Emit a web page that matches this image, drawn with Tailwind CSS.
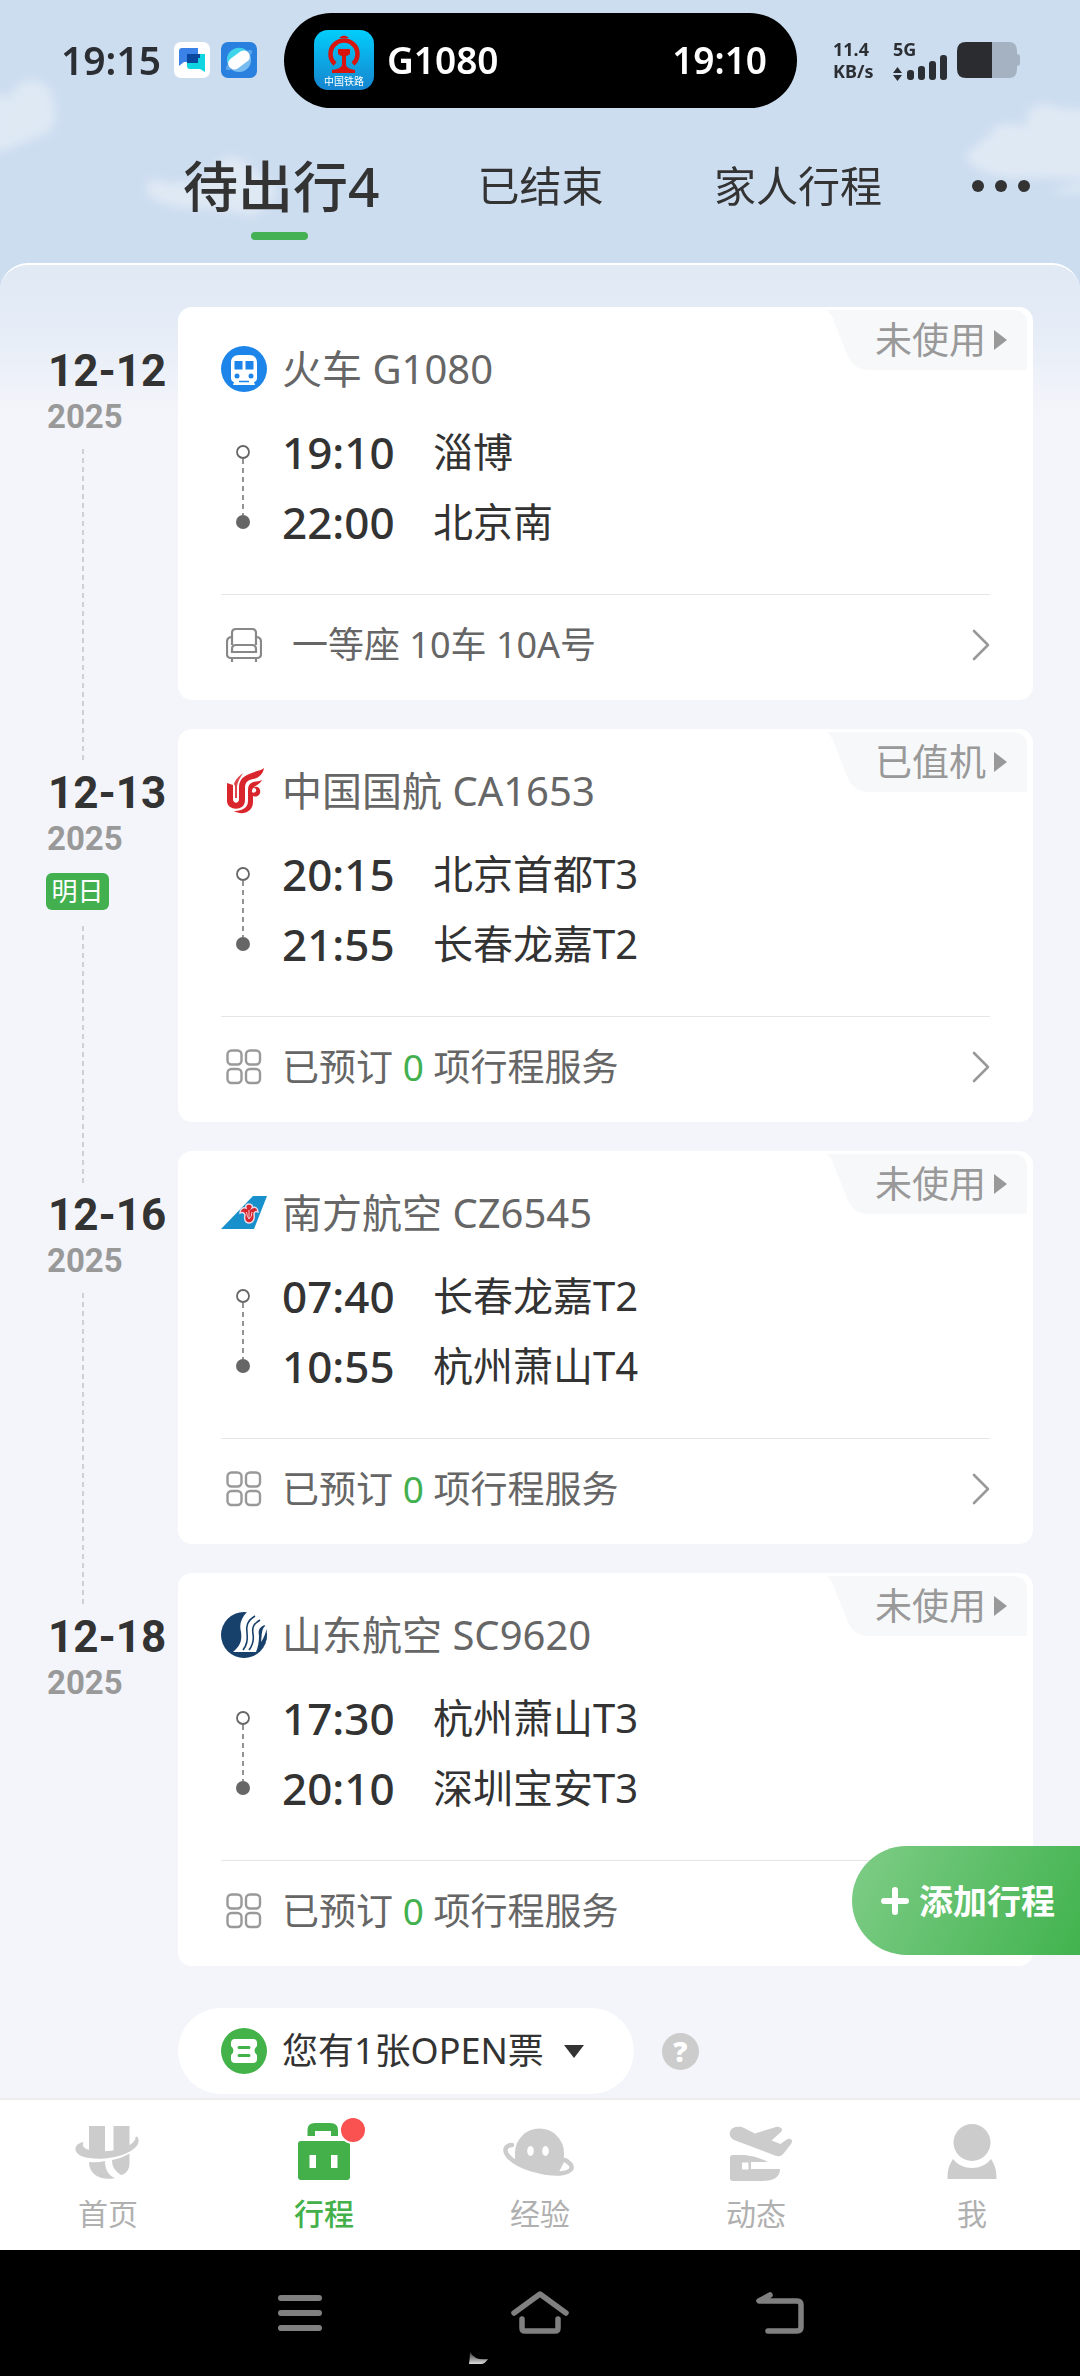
<!DOCTYPE html>
<html lang="zh-CN">
<head>
<meta charset="utf-8">
<meta name="viewport" content="width=device-width, initial-scale=1">
<title>行程</title>
<script src="https://cdn.jsdelivr.net/npm/@tailwindcss/browser@4"></script>
</head>
<body class="bg-[#cdddf0] font-['Noto_Sans','Noto_Sans_CJK_SC',sans-serif] text-[#333]">

<!-- shared icons -->
<svg class="hidden" aria-hidden="true">
  <symbol id="grid" viewBox="0 0 36 36"><g fill="none" stroke="#999" stroke-width="2.4"><rect x="1.5" y="1.5" width="14" height="14" rx="4"/><rect x="20" y="1.5" width="14" height="14" rx="4"/><rect x="1.5" y="20" width="14" height="14" rx="4"/><rect x="20" y="20" width="14" height="14" rx="4"/></g></symbol>
  <symbol id="chevron" viewBox="0 0 18 32"><path d="M2 2 L16 16 L2 30" fill="none" stroke="#999" stroke-width="2.6" stroke-linecap="round" stroke-linejoin="round"/></symbol>
  <symbol id="tagshape" viewBox="0 0 200 60"><path d="M0 0 H186 Q200 0 200 14 V60 H42 C30 60 24 54 20 44 L8 14 Q5 4 0 0Z" fill="#f7f8fa"/></symbol>
  <symbol id="route" viewBox="0 0 16 86"><circle cx="8" cy="8" r="6" fill="#fff" stroke="#666" stroke-width="1.8"/><path d="M8 15 V71" stroke="#666" stroke-width="1.4" stroke-dasharray="5 4"/><circle cx="8" cy="78" r="7" fill="#666"/></symbol>
</svg>

<div class="relative flex min-h-screen flex-col">

  <!-- sky -->
  <svg class="absolute inset-x-0 top-0 h-[264px] w-full" viewBox="0 0 1080 264" preserveAspectRatio="none" aria-hidden="true">
    <defs><filter id="soft" x="-30%" y="-30%" width="160%" height="160%"><feGaussianBlur stdDeviation="5"/></filter></defs>
    <g fill="#e3ecf5" filter="url(#soft)">
      <path d="M-10 96 Q4 92 10 98 Q14 80 34 80 Q54 84 54 106 Q60 124 46 134 Q30 140 16 146 Q2 150 -10 156Z" opacity=".75"/>
      <path d="M146 190 Q146 178 160 180 Q168 186 180 182 Q206 188 212 168 Q228 150 246 162 Q262 180 276 186 Q276 206 250 216 Q214 206 184 208 Q152 204 146 190Z" opacity=".8"/>
      <path d="M966 156 Q978 142 990 136 Q994 122 1012 124 Q1024 128 1028 122 Q1024 106 1048 104 Q1066 112 1090 108 V180 Q1040 176 1010 178 Q970 172 966 156Z" opacity=".8"/>
      <path d="M1052 192 Q1066 184 1090 184 V192 Q1070 196 1052 192Z" opacity=".7"/>
    </g>
  </svg>

  <!-- status bar -->
  <div class="relative flex h-[120px] shrink-0 items-center pl-[61px] pr-[59px]">
    <span class="w-[113px] text-[39px] leading-[48px] font-semibold text-[#2b2e33]">19:15</span>
    <svg class="h-9 w-9" viewBox="0 0 36 36" role="img" aria-label="消息"><rect width="36" height="36" rx="7" fill="#fff"/><path d="M5 9 Q5 6 8 6 H24 V20 H10 L5 24Z" fill="#3b82e8"/><path d="M13 15 Q13 12 16 12 H31 V30 L26 27 H16 Q13 27 13 24Z" fill="#0fd5e0"/><path d="M13 12 H26 V16 H24 V21 H13Z" fill="#0a479f"/></svg>
    <svg class="ml-[11px] h-9 w-9" viewBox="0 0 36 36" role="img" aria-label="浏览器"><rect width="36" height="36" rx="7" fill="#2a80de"/><circle cx="18" cy="18" r="12" fill="#79bdf0"/><path d="M6 18 A12 12 0 0 1 26 9 L9 26Z" fill="#3fd4ec"/><g transform="rotate(-36 18 18)"><ellipse cx="18" cy="18" rx="16" ry="4.500" fill="#5aa6ea"/><rect x="6" y="12" width="24" height="12" rx="6" fill="#fff"/></g></svg>
    <div class="ml-[27px] mr-[36px] flex h-[95px] flex-1 items-center rounded-full bg-black pl-[30px] pr-[30px] text-[37px] leading-[46px] font-semibold text-white">
      <svg class="mr-[13px] h-[60px] w-[60px]" viewBox="0 0 60 60" role="img" aria-label="中国铁路">
        <defs><linearGradient id="rail" x1="0" y1="0" x2="0" y2="1"><stop offset="0" stop-color="#02cdfb"/><stop offset="1" stop-color="#1684cf"/></linearGradient></defs>
        <rect width="60" height="60" rx="14" fill="url(#rail)"/>
        <path d="M21 34 A13.500 13.500 0 1 1 39 34" fill="none" stroke="#d8140f" stroke-width="4.500"/>
        <path d="M25 8 Q30 3 35 8Z M24 19 H36 V23 Q36 25 32 26 V35 Q33 39 41 40 V43 H18 V40 Q27 39 28 35 V26 Q24 25 24 23Z" fill="#d8140f"/>
        <text x="30" y="55" text-anchor="middle" font-size="10" fill="#fff" font-weight="400">中国铁路</text>
      </svg>
      <span>G1080</span>
      <span class="ml-auto">19:10</span>
    </div>
    <div class="w-[60px] text-[18px] leading-[22px] font-bold text-[#2b2e33]"><div>11.4</div><div>KB/s</div></div>
    <div class="flex h-[44px] w-[56px] flex-col justify-between text-[#2b2e33]">
      <span class="text-[18px] leading-[22px] font-bold">5G</span>
      <svg class="-mt-[7px] h-[27px] w-[56px]" viewBox="0 13 56 27" role="img" aria-label="信号"><path d="M0 31 L4.500 25 L9 31Z M0 33 H9 L4.500 39Z" fill="#2b2e33"/><g fill="#2b2e33"><rect x="14" y="28" width="7" height="10" rx="3"/><rect x="25" y="24" width="7" height="14" rx="3"/><rect x="36" y="19" width="7" height="19" rx="3"/><rect x="47" y="13" width="7" height="25" rx="3"/></g></svg>
    </div>
    <svg class="ml-[8px] h-9 w-[64px]" viewBox="0 0 64 36" role="img" aria-label="电量"><path d="M35 0 H52 Q60 0 60 9 V12 Q63 12 63 15 V21 Q63 24 60 24 V27 Q60 36 52 36 H35Z" fill="#a5b2c1"/><path d="M35 0 H9 Q0 0 0 9 V27 Q0 36 9 36 H35Z" fill="#2b2c2f"/></svg>
  </div>

  <!-- trip tabs -->
  <nav class="relative mb-[11px] flex h-[132px] shrink-0 items-center pl-[183px] pr-[50px] text-[42px] leading-[56px]" aria-label="行程分类">
    <a href="#" class="relative text-[55px] font-medium" aria-current="page">待出行4<span class="absolute -bottom-[26px] left-[68px] h-2 w-[57px] rounded-full bg-[#44b154]"></span></a>
    <a href="#" class="ml-[98px]">已结束</a>
    <a href="#" class="ml-auto">家人行程</a>
    <button type="button" aria-label="更多" class="ml-[90px] flex gap-[11px]"><span class="h-3 w-3 rounded-full bg-[#333]"></span><span class="h-3 w-3 rounded-full bg-[#333]"></span><span class="h-3 w-3 rounded-full bg-[#333]"></span></button>
  </nav>

  <!-- trip list -->
  <main class="relative flex-1 rounded-t-[28px] border-t-2 border-white bg-[linear-gradient(to_bottom,#e0e9f4_0px,#e3ebf6_50px,#f4f5fa_150px)] pt-[42px]">
    <ul>
      <li class="flex h-[422px] items-start">
        <div class="flex w-[178px] shrink-0 flex-col self-stretch pt-[39px]">
          <time datetime="2025-12-12"><span class="ml-[48px] block font-['Roboto'] text-[44px] leading-[50px] font-bold">12-12</span><span class="ml-[47px] block font-['Roboto'] text-[33px] leading-[42px] font-bold text-[#999]">2025</span></time>
          <span class="-mb-[33px] ml-[82px] mt-[11px] w-[2px] flex-1 bg-[repeating-linear-gradient(to_bottom,#cfd0d5_0px_5px,transparent_5px_9px)]"></span>
        </div>
        <article class="relative mr-[47px] flex-1 rounded-[14px] bg-white px-[43px] pb-[5px] pt-[34px]">
          <a href="#" class="absolute right-[6px] top-[3px] flex h-[60px] w-[200px] items-center gap-[8px] pl-[48px] text-[37px] leading-[56px] text-[#999]"><svg class="absolute inset-0 h-[60px] w-[200px]" aria-hidden="true"><use href="#tagshape"/></svg><span class="relative">未使用</span><svg class="relative h-5 w-[13px]" viewBox="0 0 13 20"><path d="M0 0 L13 10 L0 20Z" fill="#999"/></svg></a>
          <h2 class="flex h-[56px] items-center gap-[15px] text-[40px] leading-[56px] text-[#666]">
            <svg class="h-[46px] w-[46px]" viewBox="0 0 46 46" aria-hidden="true"><circle cx="23" cy="23" r="23" fill="#1d85ea"/><path d="M10 17 Q10 9 18 9 H28 Q36 9 36 17 V32 Q36 35 33 36 L34 39 H12 L13 36 Q10 35 10 32Z" fill="#fff"/><path d="M13.500 15 H21.500 V23.500 H13.500Z M24.500 15 H32.500 V23.500 H24.500Z" fill="#1d85ea"/><circle cx="16" cy="30" r="2.500" fill="#1d85ea"/><circle cx="30" cy="30" r="2.500" fill="#1d85ea"/><path d="M18 35.500 H28" stroke="#1d85ea" stroke-width="1.500"/></svg>火车 G1080</h2>
          <div class="mt-5 flex items-center">
            <svg class="ml-[14px] h-[86px] w-[16px]" aria-hidden="true"><use href="#route"/></svg>
            <dl class="ml-[31px] grid grid-cols-[151px_1fr] text-[40px] leading-[70px]"><dt class="text-[44px] font-medium">19:10</dt><dd>淄博</dd><dt class="text-[44px] font-medium">22:00</dt><dd>北京南</dd></dl>
          </div>
          <a href="#" class="mt-[37px] flex h-[101px] items-center border-t border-[#e6e6e6] text-[36px] leading-[56px] text-[#666]"><svg class="ml-[5px] mr-[30px] h-9 w-9" viewBox="0 0 36 36" aria-hidden="true"><g fill="none" stroke="#888" stroke-width="2.200"><path d="M6 18 V6 Q6 2 10 2 H26 Q30 2 30 6 V18"/><path d="M6 10 Q1 10 1 15 V27 Q1 31 5 31 H31 Q35 31 35 27 V15 Q35 10 30 10"/><path d="M6 25 V22 Q6 18 10 18 H26 Q30 18 30 22 V25Z M6 31 V35 M30 31 V35"/></g></svg><span class="flex-1">一等座 10车 10A号</span><svg class="h-8 w-[18px]" aria-hidden="true"><use href="#chevron"/></svg></a>
        </article>
      </li>

      <li class="flex h-[422px] items-start">
        <div class="flex w-[178px] shrink-0 flex-col self-stretch pt-[39px]">
          <time datetime="2025-12-13"><span class="ml-[48px] block font-['Roboto'] text-[44px] leading-[50px] font-bold">12-13</span><span class="ml-[47px] block font-['Roboto'] text-[33px] leading-[42px] font-bold text-[#999]">2025</span></time>
          <span class="ml-[46px] mt-[13px] w-[63px] rounded-[6px] bg-[#43b04f] text-center text-[26px] leading-[37px] text-white">明日</span>
          <span class="-mb-[33px] ml-[82px] mt-4 w-[2px] flex-1 bg-[repeating-linear-gradient(to_bottom,#cfd0d5_0px_5px,transparent_5px_9px)]"></span>
        </div>
        <article class="relative mr-[47px] flex-1 rounded-[14px] bg-white px-[43px] pb-[5px] pt-[34px]">
          <a href="#" class="absolute right-[6px] top-[3px] flex h-[60px] w-[200px] items-center gap-[8px] pl-[48px] text-[37px] leading-[56px] text-[#999]"><svg class="absolute inset-0 h-[60px] w-[200px]" aria-hidden="true"><use href="#tagshape"/></svg><span class="relative">已值机</span><svg class="relative h-5 w-[13px]" viewBox="0 0 13 20"><path d="M0 0 L13 10 L0 20Z" fill="#999"/></svg></a>
          <h2 class="flex h-[56px] items-center gap-[15px] text-[40px] leading-[56px] text-[#666]">
            <svg class="h-[46px] w-[46px]" viewBox="0 0 46 46" aria-hidden="true"><g fill="#d9262c"><path d="M43 0 C40 3 33 3 26 7 C20 10 18 14 18 20 V31 C18 36 12 36 12 31 V17 L6 15 V33 C6 43 24 44 24 32 V20 C24 14 27 12 32 11 C38 10 42 6 43 0Z"/><path d="M41 12 C37 14 32 13 29 16 C27 18 27 20 27 24 V33 C27 41 19 43 13 43 C21 48 32 44 32 34 V28 C37 30 40 26 39 22 C38 18 34 18 32 20 C34 20 36 21 35 23 C34 25 32 25 31 24 C30 18 38 18 41 12Z"/><path d="M13 16 C14 12 18 8 22 5 C19 10 17 13 16 18 V30 H14 V18Z" opacity=".85"/></g></svg>中国国航 CA1653</h2>
          <div class="mt-5 flex items-center">
            <svg class="ml-[14px] h-[86px] w-[16px]" aria-hidden="true"><use href="#route"/></svg>
            <dl class="ml-[31px] grid grid-cols-[151px_1fr] text-[40px] leading-[70px]"><dt class="text-[44px] font-medium">20:15</dt><dd>北京首都T3</dd><dt class="text-[44px] font-medium">21:55</dt><dd>长春龙嘉T2</dd></dl>
          </div>
          <a href="#" class="mt-[37px] flex h-[101px] items-center border-t border-[#e6e6e6] text-[37px] leading-[56px] text-[#666]"><svg class="ml-[5px] mr-[20px] h-9 w-9" aria-hidden="true"><use href="#grid"/></svg><span class="flex-1">已预订 <span class="text-[#43b04f]">0</span> 项行程服务</span><svg class="h-8 w-[18px]" aria-hidden="true"><use href="#chevron"/></svg></a>
        </article>
      </li>

      <li class="flex h-[422px] items-start">
        <div class="flex w-[178px] shrink-0 flex-col self-stretch pt-[39px]">
          <time datetime="2025-12-16"><span class="ml-[48px] block font-['Roboto'] text-[44px] leading-[50px] font-bold">12-16</span><span class="ml-[47px] block font-['Roboto'] text-[33px] leading-[42px] font-bold text-[#999]">2025</span></time>
          <span class="-mb-[33px] ml-[82px] mt-[11px] w-[2px] flex-1 bg-[repeating-linear-gradient(to_bottom,#cfd0d5_0px_5px,transparent_5px_9px)]"></span>
        </div>
        <article class="relative mr-[47px] flex-1 rounded-[14px] bg-white px-[43px] pb-[5px] pt-[34px]">
          <a href="#" class="absolute right-[6px] top-[3px] flex h-[60px] w-[200px] items-center gap-[8px] pl-[48px] text-[37px] leading-[56px] text-[#999]"><svg class="absolute inset-0 h-[60px] w-[200px]" aria-hidden="true"><use href="#tagshape"/></svg><span class="relative">未使用</span><svg class="relative h-5 w-[13px]" viewBox="0 0 13 20"><path d="M0 0 L13 10 L0 20Z" fill="#999"/></svg></a>
          <h2 class="flex h-[56px] items-center gap-[15px] text-[40px] leading-[56px] text-[#666]">
            <svg class="h-[46px] w-[46px]" viewBox="0 0 46 46" aria-hidden="true"><path d="M0 39 L32 6 H46 L33 39Z" fill="#1790cb"/><path d="M28 14 C31 14 32 16 31 18 C34 16 37 18 37 22 C35 21 33 22 33 24 C34 29 32 33 28 33 C24 33 23 29 24 25 C23 22 21 22 19 23 C19 19 22 17 25 18 C24 15 26 14 28 14Z" fill="#d8242c" stroke="#e9d7e4" stroke-width="1.500"/><path d="M28 20 V29 M25.500 22 Q26 27 28 29 M31 22 Q31 27 28 29" stroke="#f1c9cf" fill="none"/></svg>南方航空 CZ6545</h2>
          <div class="mt-5 flex items-center">
            <svg class="ml-[14px] h-[86px] w-[16px]" aria-hidden="true"><use href="#route"/></svg>
            <dl class="ml-[31px] grid grid-cols-[151px_1fr] text-[40px] leading-[70px]"><dt class="text-[44px] font-medium">07:40</dt><dd>长春龙嘉T2</dd><dt class="text-[44px] font-medium">10:55</dt><dd>杭州萧山T4</dd></dl>
          </div>
          <a href="#" class="mt-[37px] flex h-[101px] items-center border-t border-[#e6e6e6] text-[37px] leading-[56px] text-[#666]"><svg class="ml-[5px] mr-[20px] h-9 w-9" aria-hidden="true"><use href="#grid"/></svg><span class="flex-1">已预订 <span class="text-[#43b04f]">0</span> 项行程服务</span><svg class="h-8 w-[18px]" aria-hidden="true"><use href="#chevron"/></svg></a>
        </article>
      </li>

      <li class="flex h-[422px] items-start">
        <div class="w-[178px] shrink-0 pt-[39px]">
          <time datetime="2025-12-18"><span class="ml-[48px] block font-['Roboto'] text-[44px] leading-[50px] font-bold">12-18</span><span class="ml-[47px] block font-['Roboto'] text-[33px] leading-[42px] font-bold text-[#999]">2025</span></time>
        </div>
        <article class="relative mr-[47px] flex-1 rounded-[14px] bg-white px-[43px] pb-[5px] pt-[34px]">
          <a href="#" class="absolute right-[6px] top-[3px] flex h-[60px] w-[200px] items-center gap-[8px] pl-[48px] text-[37px] leading-[56px] text-[#999]"><svg class="absolute inset-0 h-[60px] w-[200px]" aria-hidden="true"><use href="#tagshape"/></svg><span class="relative">未使用</span><svg class="relative h-5 w-[13px]" viewBox="0 0 13 20"><path d="M0 0 L13 10 L0 20Z" fill="#999"/></svg></a>
          <h2 class="flex h-[56px] items-center gap-[15px] text-[40px] leading-[56px] text-[#666]">
            <svg class="h-[46px] w-[46px]" viewBox="0 0 46 46" aria-hidden="true"><defs><clipPath id="disc"><circle cx="23" cy="23" r="23"/></clipPath></defs><circle cx="23" cy="23" r="23" fill="#17406b"/><path d="M27 -1 C20 6 18 12 20 20 C21 28 20 33 12 40 H39 C43 36 45 31 46 22 C46 12 42 5 27 -1Z" fill="#fff"/><g clip-path="url(#disc)"><g fill="none" stroke="#17406b"><path d="M34 4 C26 9 25 14 26 21 C27 28 26 33 22 38" stroke-width="1.600"/><path d="M39 8 C32 12 31 16 32 22 C33 28 32 33 28 38" stroke-width="1.600"/></g><path d="M46 12 C38 15 37 18 38 24 C38 30 37 35 35 40 H42 C48 33 48 24 46 12Z M44 14 C40 18 41 24 40 30 C43 26 45 20 46 15Z" fill="#17406b" fill-rule="evenodd"/></g></svg>山东航空 SC9620</h2>
          <div class="mt-5 flex items-center">
            <svg class="ml-[14px] h-[86px] w-[16px]" aria-hidden="true"><use href="#route"/></svg>
            <dl class="ml-[31px] grid grid-cols-[151px_1fr] text-[40px] leading-[70px]"><dt class="text-[44px] font-medium">17:30</dt><dd>杭州萧山T3</dd><dt class="text-[44px] font-medium">20:10</dt><dd>深圳宝安T3</dd></dl>
          </div>
          <a href="#" class="mt-[37px] flex h-[101px] items-center border-t border-[#e6e6e6] text-[37px] leading-[56px] text-[#666]"><svg class="ml-[5px] mr-[20px] h-9 w-9" aria-hidden="true"><use href="#grid"/></svg><span class="flex-1">已预订 <span class="text-[#43b04f]">0</span> 项行程服务</span><svg class="h-8 w-[18px]" aria-hidden="true"><use href="#chevron"/></svg></a>
        </article>
      </li>
    </ul>

    <div class="ml-[178px] mt-[13px] flex items-center gap-[28px] pb-1">
      <button type="button" class="flex h-[86px] items-center rounded-full bg-white pl-[43px] pr-[50px] text-[36px] leading-[56px]">
        <svg class="mr-[15px] h-[46px] w-[46px]" viewBox="0 0 46 46" aria-hidden="true"><circle cx="23" cy="23" r="23" fill="#42b249"/><path d="M14 11 H32 Q36 11 36 15 V18 Q31 22.500 36 27 V31 Q36 35 32 35 H14 Q10 35 10 31 V27 Q15 22.500 10 18 V15 Q10 11 14 11Z" fill="#fff"/><path d="M18 19.500 H28 M18 27.500 H28" stroke="#42b249" stroke-width="3" stroke-linecap="round"/></svg>
        您有1张OPEN票
        <svg class="ml-[20px] h-[13px] w-[20px]" viewBox="0 0 20 13" aria-hidden="true"><path d="M0 0 H20 L10 13Z" fill="#333"/></svg>
      </button>
      <button type="button" aria-label="帮助" class="h-[37px] w-[37px] rounded-full bg-[#ccc] text-[28px] leading-[37px] font-black text-white">?</button>
    </div>

    <button type="button" class="absolute bottom-[143px] right-0 flex h-[109px] items-center gap-[10px] rounded-l-full bg-[linear-gradient(115deg,#7fcd87_0%,#6cc576_30%,#41b34e_100%)] pl-[29px] pr-[25px] text-[34px] leading-[48px] font-bold text-white">
      <svg class="h-7 w-7" viewBox="0 0 28 28" aria-hidden="true"><path d="M14 3 V25 M3 14 H25" stroke="#fff" stroke-width="6" stroke-linecap="round"/></svg>添加行程</button>
  </main>

  <!-- app tab bar -->
  <nav class="relative grid h-[152px] shrink-0 grid-cols-5 border-t-2 border-[#ececec] bg-white text-[30px] leading-[40px] text-[#b0b0b0]" aria-label="主导航">
    <a href="#" class="flex flex-col items-center pt-5">
      <svg class="h-16 w-[72px]" viewBox="0 0 72 64" fill="#ccc" aria-hidden="true"><g transform="translate(3 4)"><path d="M14 2 H30 V28 H14Z M38.500 2 H54.500 V26 L38.500 30Z"/><path d="M8.500 18 C-3 20 -3 32 14 34 C34 37 58 30 63 20 C65 15 62 11 60.500 13 C61 19 50 25 38 26.500 C26 28 4 28 8.500 18Z"/><path d="M14 38 Q22 39 30 37 C30 46 34 52 40 54 C28 57 14 52 14 38Z M37 36 C45 34.500 50 32 54.500 29.500 V39 C54.500 46 51 50 46 51 C40 47 37 43 37 36Z"/></g></svg>
      <span class="mt-[10px]">首页</span></a>
    <a href="#" class="flex flex-col items-center pt-5 font-medium text-[#43b049]" aria-current="page">
      <span class="relative"><svg class="h-16 w-[72px]" viewBox="0 0 72 64" fill="#43b049" aria-hidden="true"><path d="M19.500 16 V10 Q19.500 3 27 3 H42 Q50 3 50 10 V16 H43 V11 H27 V16Z"/><path d="M13 21 H59 Q62 21 62 24 V57 Q62 60 59 60 H13 Q10 60 10 57 V24 Q10 21 13 21Z M21.500 35 V48 H28 V35Z M43 35 V48 H49.500 V35Z" fill-rule="evenodd"/></svg><span class="absolute -right-[7px] -top-[4px] h-7 w-7 rounded-full border-2 border-white bg-[#fa5151]"></span></span>
      <span class="mt-[10px]">行程</span></a>
    <a href="#" class="flex flex-col items-center pt-5">
      <svg class="h-16 w-[72px] overflow-visible" viewBox="0 0 72 64" aria-hidden="true"><path d="M11 42 V33 A24.500 24.500 0 0 1 60 33 V42 L55 52 C40 53 22 49 11 42Z" fill="#ccc"/><path d="M8 25 C2 25 -1 30 4 36 C14 48 40 54 56 53.500 C70 52 71 46 61 40" fill="none" stroke="#ccc" stroke-width="4.500" stroke-linecap="round"/><ellipse cx="26.500" cy="31" rx="3.300" ry="5" fill="#fff"/><ellipse cx="41.500" cy="31" rx="3.300" ry="5" fill="#fff"/></svg>
      <span class="mt-[10px]">经验</span></a>
    <a href="#" class="flex flex-col items-center pt-5">
      <svg class="h-16 w-[72px]" viewBox="0 0 72 64" fill="#ccc" aria-hidden="true"><path d="M10 12 C11 7 17 6 22 7 L35 13.500 L56 7 C60 6 64 9 61 12 L51.500 20.500 L60.500 24 L66 20 C70 17 74 20 71 24 L64 33 C62 36 59 37 55 35.500 L14 20 C11 18 9 16 10 12Z"/><path d="M13 35 H25 Q37 36 48 42 H31 V49 H60 Q60 61 42 61 H13 Q10 61 10 58 V38 Q10 35 13 35Z M22 42.500 V49.500 H28.500 V42.500Z" fill-rule="evenodd"/></svg>
      <span class="mt-[10px]">动态</span></a>
    <a href="#" class="flex flex-col items-center pt-5">
      <svg class="h-16 w-[72px]" viewBox="0 0 72 64" fill="#ccc" aria-hidden="true"><circle cx="36" cy="22.500" r="18.500"/><path d="M11.500 59 C11.500 50 13 45 17 39 C26 51 46 51 55 39 C59 45 60.500 50 60.500 59Z"/></svg>
      <span class="mt-[10px]">我</span></a>
  </nav>

  <!-- system navigation -->
  <div class="relative flex h-[126px] shrink-0 items-start justify-center gap-[180px] bg-black pt-[34px]">
    <button type="button" aria-label="最近任务"><svg class="h-[60px] w-[60px]" viewBox="0 0 60 60"><path d="M11 14 H49 M11 29 H49 M11 44 H49" stroke="#808080" stroke-width="6" stroke-linecap="round"/></svg></button>
    <button type="button" aria-label="主屏幕"><svg class="h-[60px] w-[60px]" viewBox="0 0 60 60" fill="none" stroke="#808080" stroke-width="5.500" stroke-linecap="round" stroke-linejoin="round"><path d="M4 29 L30 10 L56 29"/><path d="M12 35 V44 Q12 47 15 47 H45 Q48 47 48 44 V35"/></svg></button>
    <button type="button" aria-label="返回"><svg class="h-[60px] w-[60px]" viewBox="0 0 60 60" fill="none" stroke="#808080" stroke-width="5.500" stroke-linecap="round" stroke-linejoin="round"><path d="M20 11 L9 17 H47 Q51 17 51 21 V43 Q51 47 47 47 H18"/></svg></button>
    <svg class="absolute bottom-[11px] left-[467px] h-4 w-[24px]" viewBox="0 0 24 16" aria-hidden="true"><defs><linearGradient id="moon" x1="0" y1="0" x2="0" y2="1"><stop offset="0" stop-color="#333"/><stop offset="1" stop-color="#ddd"/></linearGradient></defs><path d="M3 3 Q8 12 21 10 Q18 15 14 15 H2 Q3 8 3 3Z" fill="url(#moon)"/></svg>
  </div>
</div>
</body>
</html>
